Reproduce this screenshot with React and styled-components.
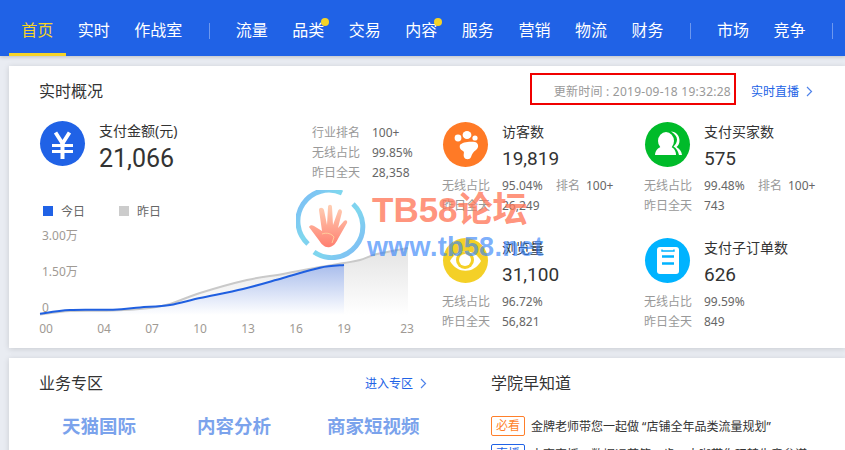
import React from "react";
import styled, { createGlobalStyle } from "styled-components";

const FONT = `"Noto Sans", "Noto Sans CJK SC", sans-serif`;

const GlobalStyle = createGlobalStyle`
  html, body {
    margin: 0;
    padding: 0;
    height: 450px;
    overflow: hidden;
    background: #e9ecf2;
    font-family: ${FONT};
  }
`;

const Page = styled.div`
  position: relative;
  width: 845px;
  height: 450px;
  overflow: hidden;
`;

// Top nav
const Nav = styled.div`
  display: flex;
  align-items: stretch;
  height: 56px;
  padding-left: 9px;
  background: #2062e6;
  box-shadow: 0 1px 4px rgba(0, 0, 0, 0.2);
`;

const NavItem = styled.div`
  position: relative;
  flex: none;
  display: flex;
  align-items: center;
  padding: 4px 12.25px 0;
  font-size: 16px;
  color: ${(props) => (props.$active ? "#f5d327" : "#fff")};
  border-bottom: 3px solid ${(props) => (props.$active ? "#f5d327" : "transparent")};
  white-space: nowrap;
`;

const Dot = styled.i`
  position: absolute;
  top: 18px;
  right: 8px;
  width: 8px;
  height: 8px;
  border-radius: 50%;
  background: #f5d327;
`;

const NavDivider = styled.div`
  flex: none;
  width: 1px;
  height: 16px;
  margin: 23px 14px 0;
  background: rgba(255, 255, 255, 0.35);
`;

// Cards
const Card = styled.div`
  background: #fff;
  margin: ${(props) => props.$top}px 0 0 9px;
  width: 836px;
  box-shadow: 0 1px 6px rgba(0, 0, 0, 0.14);
`;

const OverviewCard = styled(Card)`
  height: 282px;
  padding: 7px 0 0 30px;
  box-sizing: border-box;
`;

const CardHead = styled.div`
  display: flex;
  align-items: center;
  height: 32px;
`;

const CardTitle = styled.div`
  font-size: 16px;
  color: #333;
  line-height: 22px;
`;

const HeadTitle = styled(CardTitle)`
  margin-top: 4px;
`;

const TimeBox = styled.div`
  margin-left: auto;
  display: flex;
  align-items: center;
  justify-content: flex-end;
  width: 206px;
  height: 32px;
  padding: 4px 3px 0 0;
  box-sizing: border-box;
  border: 2px solid #f00000;
  font-size: 12px;
  letter-spacing: 0.25px;
  color: #999;
  white-space: nowrap;
`;

const LiveLink = styled.div`
  display: flex;
  align-items: center;
  gap: 7px;
  margin: 4px 32px 0 15px;
  font-size: 12px;
  color: #2062e6;
  white-space: nowrap;
`;

const Columns = styled.div`
  display: flex;
  margin-top: 16px;
`;

const LeftColumn = styled.div`
  width: 403px;
`;

const MetricGrid = styled.div`
  display: grid;
  grid-template-columns: 202px 200px;
  grid-auto-rows: 116px;
  margin-top: 1px;
`;

const Metric = styled.div`
  display: flex;
  flex-direction: column;
`;

const MainRow = styled.div`
  display: flex;
  justify-content: space-between;
  padding: 0 28px 0 1px;
`;

const IconRow = styled.div`
  display: flex;
  gap: 14px;
`;

const MetricHead = styled(IconRow)`
  margin-left: 1px;
`;

const IconCircle = styled.div`
  flex: none;
  width: 45px;
  height: 45px;
  border-radius: 50%;
  background: ${(props) => props.$color};
`;

const IconSvg = styled.svg`
  display: block;
`;

const MetricName = styled.div`
  font-size: 14px;
  line-height: 20px;
  color: #333;
  white-space: nowrap;
`;

const MetricValue = styled.div`
  font-family: Roboto, ${FONT};
  font-size: ${(props) => (props.$big ? 25 : 19)}px;
  line-height: 30px;
  margin-top: ${(props) => (props.$big ? 3 : 2)}px;
  color: #333;
`;

const Details = styled.div`
  margin-top: 1px;
`;

const DetailRow = styled.div`
  display: flex;
  height: 20px;
  align-items: center;
  font-size: 12px;
  white-space: nowrap;
`;

const Label = styled.span`
  width: ${(props) => props.$w || 60}px;
  color: #999;
  margin-left: ${(props) => props.$ml || 0}px;
`;

const Val = styled.span`
  width: ${(props) => props.$w || "auto"};
  color: #666;
`;

const SideStats = styled.div`
  width: 102px;
  margin-top: 1px;
`;

const Legend = styled.div`
  display: flex;
  align-items: center;
  margin: 19px 0 0 4px;
  height: 20px;
  font-size: 12px;
  color: #666;
`;

const Swatch = styled.i`
  width: 10px;
  height: 10px;
  margin-right: 8px;
  background: ${(props) => props.$color};
`;

const LegendText = styled.span`
  width: 58px;
`;

const ChartSvg = styled.svg`
  display: block;
  margin: 4px 0 0 -9px;
`;

const AreaCard = styled(Card)`
  height: 120px;
  padding: 14px 0 0 30px;
  box-sizing: border-box;
  display: flex;
`;

const BusinessCol = styled.div`
  width: 452px;
`;

const SchoolCol = styled.div`
  flex: 1;
`;

const AreaHead = styled.div`
  display: flex;
  align-items: center;
  width: 388px;
  height: 22px;
`;

const EnterLink = styled(LiveLink)`
  margin: 0 0 0 auto;
`;

const BizRow = styled.div`
  display: flex;
  margin: 20px 0 0 23px;
  font-size: 18.5px;
  font-weight: 700;
  color: #7ba3ec;
  line-height: 24px;
`;

const BizItem = styled.div`
  width: ${(props) => props.$w}px;
  white-space: nowrap;
`;

const NewsList = styled.div`
  margin-top: 18px;
`;

const NewsRow = styled.div`
  display: flex;
  align-items: center;
  height: 28px;
  gap: 6px;
  font-size: 12px;
  color: #333;
  white-space: nowrap;
`;

const Badge = styled.span`
  width: 34px;
  height: 20px;
  box-sizing: border-box;
  border: 1px solid ${(props) => props.$color};
  border-radius: 2px;
  color: ${(props) => props.$color};
  font-size: 12px;
  line-height: 18px;
  text-align: center;
`;

// Watermark over the page
const Watermark = styled.div`
  position: absolute;
  left: 296px;
  top: 190px;
  pointer-events: none;
`;

const MarkLogo = styled.svg`
  position: absolute;
  left: 0;
  top: 1px;
`;

const MarkTitle = styled.div`
  position: absolute;
  left: 76px;
  top: -2px;
  font-family: "Liberation Sans", "Noto Sans CJK SC", sans-serif;
  font-size: 35px;
  line-height: 44px;
  font-weight: 700;
  color: rgba(255, 120, 90, 0.8);
  white-space: nowrap;
`;

const MarkUrl = styled.div`
  position: absolute;
  left: 71px;
  top: 42px;
  font-family: "Liberation Sans", sans-serif;
  font-size: 27px;
  letter-spacing: 0.3px;
  line-height: 30px;
  font-weight: 700;
  color: rgba(50, 130, 250, 0.65);
  white-space: nowrap;
`;

const Chevron = () => (
  <svg width="7" height="11" viewBox="0 0 7 11">
    <path d="M1 1l4.5 4.5L1 10" fill="none" stroke="#4f83ea" strokeWidth="1.2" />
  </svg>
);

const Icon45 = ({ children }) => (
  <IconSvg width="45" height="45" viewBox="0 0 45 45">
    {children}
  </IconSvg>
);

const YuanIcon = () => (
  <Icon45>
    <path d="M15.5 11.5l7 11 7-11" fill="none" stroke="#fff" strokeWidth="3.8" />
    <path d="M12 24.5h21M12 30.5h21" stroke="#fff" strokeWidth="3" />
    <path d="M22.5 21v17" stroke="#fff" strokeWidth="4" />
  </Icon45>
);

const FootIcon = () => (
  <Icon45>
    <circle cx="15" cy="16" r="3.4" fill="#fff" />
    <ellipse cx="24" cy="13" rx="4.4" ry="4" fill="#fff" />
    <circle cx="32" cy="16" r="2.6" fill="#fff" />
    <path
      d="M17 23C19 20 27 19 32 20 36 21 36 26 33 28 30 30 29 32 28 35 27 38 22 38 21 35 20 32 22 30 20 29 18 28 16 26 17 23Z"
      fill="#fff"
    />
  </Icon45>
);

const BuyerIcon = () => (
  <Icon45>
    <ellipse cx="21" cy="19" rx="8" ry="9" fill="#fff" />
    <path d="M10 33c0-5 4-8 8-9h6c4 1 7 4 7 9z" fill="#fff" />
    <path
      d="M26 9.5c5 0 8.500 4 8.500 9 0 3-1 5-3 6.500 3 2 5 4 5.500 8h-3c-1-4-2.500-6.500-5.500-8.500 2-2 3.500-4 3.500-7s-2.500-6-6-8z"
      fill="#fff"
    />
  </Icon45>
);

const EyeIcon = () => (
  <Icon45>
    <path d="M7 23C14 10 31 10 38 23 31 36 14 36 7 23z" fill="#fff" />
    <circle cx="22" cy="22" r="9" fill="#f4d027" />
    <circle cx="22" cy="22" r="6" fill="#fff" />
  </Icon45>
);

const OrderIcon = () => (
  <Icon45>
    <rect x="12" y="9" width="22" height="27" rx="3" fill="#fff" />
    <path d="M17 11.500v1.500h12v-1.500" fill="none" stroke="#00b3ff" strokeWidth="1.4" />
    <path d="M17 18.500h12M17 25.500h12" stroke="#00b3ff" strokeWidth="2.4" />
  </Icon45>
);

const HandLogo = () => (
  <svg width="70" height="70" viewBox="0 0 70 70">
    <defs>
      <linearGradient id="ring" x1="0" y1="0" x2="1" y2="1">
        <stop offset="0" stopColor="#7db9f7" />
        <stop offset="0.5" stopColor="#7fd7ee" />
        <stop offset="1" stopColor="#7fb8f6" />
      </linearGradient>
      <linearGradient id="palm" x1="0" y1="0" x2="0" y2="1">
        <stop offset="0" stopColor="#ffd0b5" />
        <stop offset="1" stopColor="#ff7f70" />
      </linearGradient>
    </defs>
    <path d="M12 54A31 31 0 0 1 46 3" fill="none" stroke="url(#ring)" strokeWidth="5" />
    <path d="M57 14A31 31 0 0 1 18 62" fill="none" stroke="url(#ring)" strokeWidth="5" />
    <path
      d="M13 37c1-2 3-2 5-1l8 5-3-21c0-3 4-3 5 0l3 15 1-18c0-3 4-3 4 0l1 18 5-14c1-3 4-2 4 1l-4 16 6-7c2-2 4 0 3 2l-8 14c-3 6-5 9-9 10-5 1-8-2-12-8z"
      fill="url(#palm)"
    />
    <path d="M26 44c5-2 10 0 12 3l-2 6" fill="none" stroke="#ffd9a0" strokeWidth="0.8" />
  </svg>
);

const NAV_GROUPS = [
  [{ label: "首页", active: true }, { label: "实时" }, { label: "作战室" }],
  [
    { label: "流量" },
    { label: "品类", dot: true },
    { label: "交易" },
    { label: "内容", dot: true },
    { label: "服务" },
    { label: "营销" },
    { label: "物流" },
    { label: "财务" },
  ],
  [{ label: "市场" }, { label: "竞争" }],
];

const METRICS = [
  { name: "访客数", value: "19,819", mobile: "95.04%", rank: "100+", yesterday: "26,249", color: "#ff7a26", icon: <FootIcon /> },
  { name: "支付买家数", value: "575", mobile: "99.48%", rank: "100+", yesterday: "743", color: "#00bb2a", icon: <BuyerIcon /> },
  { name: "浏览量", value: "31,100", mobile: "96.72%", yesterday: "56,821", color: "#f4d027", icon: <EyeIcon /> },
  { name: "支付子订单数", value: "626", mobile: "99.59%", yesterday: "849", color: "#00b3ff", icon: <OrderIcon /> },
];

const X_TICKS = [
  ["00", 46],
  ["04", 104],
  ["07", 152],
  ["10", 200],
  ["13", 248],
  ["16", 296],
  ["19", 344],
  ["23", 407],
];

const Y_TICKS = [
  ["3.00万", 240],
  ["1.50万", 276],
  ["0", 312],
];

// points are in page pixels, read off the screenshot
const TODAY = [
  [40, 313.7], [70, 310], [113, 309.7], [140, 307.5], [170, 305], [200, 298], [243, 289],
  [283, 278], [320, 267.7], [344, 265],
];
const YESTERDAY = [
  [40, 314.5], [70, 311], [113, 310.5], [150, 308], [170, 304], [200, 293], [247, 280],
  [283, 274], [320, 267], [344, 263], [360, 260], [377, 254], [408, 248],
];

const smoothPath = (pts) => {
  let d = `M${pts[0][0]} ${pts[0][1]}`;
  for (let i = 0; i < pts.length - 1; i++) {
    const p0 = pts[i - 1] || pts[i];
    const p1 = pts[i];
    const p2 = pts[i + 1];
    const p3 = pts[i + 2] || p2;
    const c1x = p1[0] + (p2[0] - p0[0]) / 6;
    const c1y = p1[1] + (p2[1] - p0[1]) / 6;
    const c2x = p2[0] - (p3[0] - p1[0]) / 6;
    const c2y = p2[1] - (p3[1] - p1[1]) / 6;
    d += `C${c1x} ${c1y} ${c2x} ${c2y} ${p2[0]} ${p2[1]}`;
  }
  return d;
};

const todayLine = smoothPath(TODAY);
const yesterdayLine = smoothPath(YESTERDAY);

const Chart = () => (
  // viewBox keeps page coordinates so the points read straight off the screen
  <ChartSvg width="390" height="120" viewBox="30 225 390 120">
    <defs>
      <linearGradient id="blueFill" x1="0" y1="0" x2="0" y2="1">
        <stop offset="0" stopColor="#a9bdec" />
        <stop offset="1" stopColor="#ffffff" />
      </linearGradient>
      <linearGradient id="grayFill" x1="0" y1="0" x2="0" y2="1">
        <stop offset="0" stopColor="#e4e4e4" />
        <stop offset="1" stopColor="#ffffff" />
      </linearGradient>
    </defs>
    <path d={`${yesterdayLine}V315H40Z`} fill="url(#grayFill)" />
    <path d={`${todayLine}V315H40Z`} fill="url(#blueFill)" />
    <path d={yesterdayLine} fill="none" stroke="#c9c9c9" strokeWidth="2" />
    <path d={todayLine} fill="none" stroke="#1f5fe0" strokeWidth="2" />
    {Y_TICKS.map(([t, y]) => (
      <text key={t} x="42" y={y} fontSize="12" fill="#a09a94" fontFamily={FONT}>
        {t}
      </text>
    ))}
    {X_TICKS.map(([t, x]) => (
      <text key={t} x={x} y="333" fontSize="12" fill="#a09a94" textAnchor="middle" fontFamily={FONT}>
        {t}
      </text>
    ))}
  </ChartSvg>
);

const App = () => (
  <Page>
    <GlobalStyle />
    <Nav>
      {NAV_GROUPS.map((group, i) => (
        <React.Fragment key={i}>
          {group.map((item) => (
            <NavItem key={item.label} $active={item.active}>
              {item.label}
              {item.dot && <Dot />}
            </NavItem>
          ))}
          <NavDivider />
        </React.Fragment>
      ))}
    </Nav>

    <OverviewCard $top={10}>
      <CardHead>
        <HeadTitle>实时概况</HeadTitle>
        <TimeBox>更新时间 : 2019-09-18 19:32:28</TimeBox>
        <LiveLink>
          实时直播 <Chevron />
        </LiveLink>
      </CardHead>
      <Columns>
        <LeftColumn>
          <MainRow>
            <IconRow>
              <IconCircle $color="#2062e6">
                <YuanIcon />
              </IconCircle>
              <div>
                <MetricName>支付金额(元)</MetricName>
                <MetricValue $big>21,066</MetricValue>
              </div>
            </IconRow>
            <SideStats>
              <DetailRow>
                <Label>行业排名</Label>
                <Val>100+</Val>
              </DetailRow>
              <DetailRow>
                <Label>无线占比</Label>
                <Val>99.85%</Val>
              </DetailRow>
              <DetailRow>
                <Label>昨日全天</Label>
                <Val>28,358</Val>
              </DetailRow>
            </SideStats>
          </MainRow>
          <Legend>
            <Swatch $color="#2062e6" />
            <LegendText>今日</LegendText>
            <Swatch $color="#cccccc" />
            <LegendText>昨日</LegendText>
          </Legend>
          <Chart />
        </LeftColumn>
        <MetricGrid>
          {METRICS.map((m) => (
            <Metric key={m.name}>
              <MetricHead>
                <IconCircle $color={m.color}>{m.icon}</IconCircle>
                <div>
                  <MetricName>{m.name}</MetricName>
                  <MetricValue>{m.value}</MetricValue>
                </div>
              </MetricHead>
              <Details>
                <DetailRow>
                  <Label>无线占比</Label>
                  <Val $w="40px">{m.mobile}</Val>
                  {m.rank && (
                    <>
                      <Label $w={30} $ml={14}>
                        排名
                      </Label>
                      <Val>{m.rank}</Val>
                    </>
                  )}
                </DetailRow>
                <DetailRow>
                  <Label>昨日全天</Label>
                  <Val>{m.yesterday}</Val>
                </DetailRow>
              </Details>
            </Metric>
          ))}
        </MetricGrid>
      </Columns>
    </OverviewCard>

    <AreaCard $top={10}>
      <BusinessCol>
        <AreaHead>
          <CardTitle>业务专区</CardTitle>
          <EnterLink>
            进入专区 <Chevron />
          </EnterLink>
        </AreaHead>
        <BizRow>
          <BizItem $w={135}>天猫国际</BizItem>
          <BizItem $w={130}>内容分析</BizItem>
          <BizItem $w={100}>商家短视频</BizItem>
        </BizRow>
      </BusinessCol>
      <SchoolCol>
        <CardTitle>学院早知道</CardTitle>
        <NewsList>
          <NewsRow>
            <Badge $color="#ff7f2a">必看</Badge>
            金牌老师带您一起做 “店铺全年品类流量规划”
          </NewsRow>
          <NewsRow>
            <Badge $color="#2062e6">直播</Badge>
            电商直播，数据运营第一步，大咖带你玩转生意参谋
          </NewsRow>
        </NewsList>
      </SchoolCol>
    </AreaCard>

    <Watermark>
      <MarkLogo as={HandLogo} />
      <MarkTitle>TB58论坛</MarkTitle>
      <MarkUrl>www.tb58.net</MarkUrl>
    </Watermark>
  </Page>
);

export default App;
